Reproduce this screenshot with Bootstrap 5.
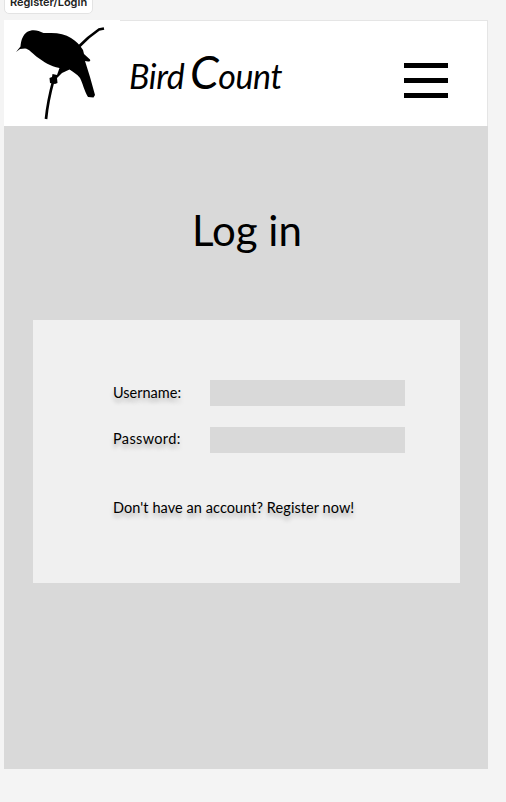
<!DOCTYPE html>
<html lang="en">
<head>
<meta charset="utf-8">
<meta name="viewport" content="width=device-width, initial-scale=1">
<title>Bird Count - Log in</title>
<link href="https://cdn.jsdelivr.net/npm/bootstrap@5.3.0/dist/css/bootstrap.min.css" rel="stylesheet">
<style>
body{background:#f4f4f4;color:#000;height:802px;font-family:Lato,"Open Sans",sans-serif}
.frame-tag-bar{height:14px}
.frame-tag{flex:none;width:89px;height:26px;padding:0;border:1px solid #e3e3e3;border-radius:5px;background:#fff;color:#222;font:600 11px/26px Inter,sans-serif}
.phone{width:484px;height:749px;margin:6px 0 0 4px;background:#d9d9d9}
.topbar{height:106px;background:#fff;border-right:1px solid #e5e5e5}
.bird{width:116px;height:106px}
.topline{height:1px;background:#e5e5e5;margin-left:116px;margin-bottom:-1px}
.brand{height:106px;padding:0;margin:0 0 0 9px;font-style:italic;font-size:34px;line-height:104px;width:156px;color:#000;letter-spacing:-.4px;word-spacing:-2px}
.brand span{font-size:46px}
.menu-btn{width:44px;height:35px;margin:43px 39px 0 auto}
.menu-btn i{height:5px;background:#000}
.title{font-weight:400;font-size:42px;line-height:50px;margin:79px 0 0 188px}
.login-card{width:427px;height:263px;margin:65px 0 0 29px;padding:60px 0 0 80px;background:#f0f0f0;font-size:14.5px;text-shadow:0 4px 4px rgba(0,0,0,.25)}
.login-card label{width:97px;line-height:26px}
.field{width:195px;height:26px;border:0;border-radius:0;background:#d9d9d9;padding:0 6px}
.second{margin-top:21px}
.second label{line-height:24px;letter-spacing:.35px}
.register{color:#000;margin-top:43px;line-height:24px;letter-spacing:.07px;white-space:nowrap}
</style>
</head>
<body class="overflow-hidden">
<div class="frame-tag-bar d-flex align-items-end overflow-hidden ps-1"><button class="frame-tag" type="button">Register/Login</button></div>
<main class="phone d-flex flex-column">
  <header class="topbar">
    <div class="topline"></div>
    <nav class="d-flex">
      <svg class="bird" viewBox="4 20 116 106" role="img" aria-label="Bird">
        <path d="M16 52 20.500 46.500C21 40 23 35 27 32C32 29 38 30 43.500 33L48 33C57 32.500 65 34 71 38C76 41 80 45 83 50L84 54L90 59.500Q91 61.500 88 61.500L85 61L90 77L95 95L93.500 97.500L88 97C84 90 83 84 80 78C77 74 73 72 69.500 69.500L62 73L57 78L57.500 83L55 84L50 83L49.500 78L52 77L52.500 74L57 75L59.500 68C50 66 44 62 37 57C32 53 29 49 25 48.500L20 49Z"/>
        <path d="M79 46.500Q88 37 99 29.500L104 28.500M53.500 80C50.500 91 47.500 103 46 119" fill="none" stroke="#000" stroke-width="2.700"/>
      </svg>
      <a class="brand text-decoration-none text-nowrap" href="#">Bird <span>C</span>ount</a>
      <button class="menu-btn border-0 bg-transparent p-0 d-flex flex-column justify-content-between" type="button" aria-label="Menu"><i class="w-100"></i><i class="w-100"></i><i class="w-100"></i></button>
    </nav>
  </header>
  <h1 class="title">Log in</h1>
  <form class="login-card">
    <div class="d-flex"><label for="user">Username:</label><input id="user" class="field" type="text"></div>
    <div class="d-flex second"><label for="pass">Password:</label><input id="pass" class="field" type="password"></div>
    <a class="register d-block text-decoration-none" href="#">Don't have an account? Register now!</a>
  </form>
</main>
<script src="https://cdn.jsdelivr.net/npm/bootstrap@5.3.0/dist/js/bootstrap.bundle.min.js"></script>
</body>
</html>
